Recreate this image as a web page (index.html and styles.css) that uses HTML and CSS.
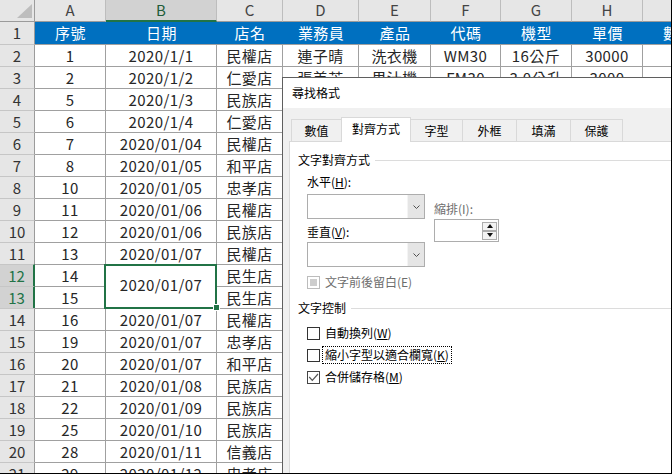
FILE: index.html
```html
<!DOCTYPE html>
<html lang="zh-Hant">
<head>
<meta charset="utf-8">
<title>尋找格式</title>
<link rel="stylesheet" href="styles.css">
</head>
<body>
<div class="screen">
  <div class="sheet">
    <div class="corner"><span class="tri"></span></div>
    <div class="ch">A</div><div class="ch sel">B</div><div class="ch">C</div><div class="ch">D</div><div class="ch">E</div><div class="ch">F</div><div class="ch">G</div><div class="ch">H</div><div class="ch">I</div>

    <div class="rh first">1</div>
    <div class="c hd">序號</div><div class="c hd">日期</div><div class="c hd">店名</div><div class="c hd">業務員</div><div class="c hd">產品</div><div class="c hd">代碼</div><div class="c hd">機型</div><div class="c hd">單價</div><div class="c hd">數量</div>

    <div class="rh">2</div>
    <div class="c">1</div><div class="c">2020/1/1</div><div class="c">民權店</div><div class="c">連子晴</div><div class="c">洗衣機</div><div class="c">WM30</div><div class="c">16公斤</div><div class="c">30000</div><div class="c"></div>

    <div class="rh">3</div>
    <div class="c">2</div><div class="c">2020/1/2</div><div class="c">仁愛店</div><div class="c">張美芳</div><div class="c">果汁機</div><div class="c">FM30</div><div class="c">3.0公升</div><div class="c">3000</div><div class="c"></div>

    <div class="rh">4</div><div class="c">5</div><div class="c">2020/1/3</div><div class="c">民族店</div><div class="fill"></div>
    <div class="rh">5</div><div class="c">6</div><div class="c">2020/1/4</div><div class="c">仁愛店</div><div class="fill"></div>
    <div class="rh">6</div><div class="c">7</div><div class="c">2020/01/04</div><div class="c">民權店</div><div class="fill"></div>
    <div class="rh">7</div><div class="c">8</div><div class="c">2020/01/05</div><div class="c">和平店</div><div class="fill"></div>
    <div class="rh">8</div><div class="c">10</div><div class="c">2020/01/05</div><div class="c">忠孝店</div><div class="fill"></div>
    <div class="rh">9</div><div class="c">11</div><div class="c">2020/01/06</div><div class="c">民權店</div><div class="fill"></div>
    <div class="rh">10</div><div class="c">12</div><div class="c">2020/01/06</div><div class="c">民族店</div><div class="fill"></div>
    <div class="rh">11</div><div class="c">13</div><div class="c">2020/01/07</div><div class="c">民權店</div><div class="fill"></div>
    <div class="rh sel">12</div><div class="c">14</div><div class="c merged">2020/01/07<span class="handle"></span></div><div class="c">民生店</div><div class="fill"></div>
    <div class="rh sel">13</div><div class="c">15</div><div class="c">民生店</div><div class="fill"></div>
    <div class="rh">14</div><div class="c">16</div><div class="c">2020/01/07</div><div class="c">民權店</div><div class="fill"></div>
    <div class="rh">15</div><div class="c">19</div><div class="c">2020/01/07</div><div class="c">忠孝店</div><div class="fill"></div>
    <div class="rh">16</div><div class="c">20</div><div class="c">2020/01/07</div><div class="c">和平店</div><div class="fill"></div>
    <div class="rh">17</div><div class="c">21</div><div class="c">2020/01/08</div><div class="c">民族店</div><div class="fill"></div>
    <div class="rh">18</div><div class="c">22</div><div class="c">2020/01/09</div><div class="c">民族店</div><div class="fill"></div>
    <div class="rh">19</div><div class="c">25</div><div class="c">2020/01/10</div><div class="c">民族店</div><div class="fill"></div>
    <div class="rh">20</div><div class="c">28</div><div class="c">2020/01/11</div><div class="c">信義店</div><div class="fill"></div>
    <div class="rh">21</div><div class="c">29</div><div class="c">2020/01/12</div><div class="c">忠孝店</div><div class="fill"></div>
  </div>

  <div class="dialog">
    <div class="dlg-title">尋找格式</div>
    <div class="dlg-body">
      <div class="tabs">
        <div class="tab tab-num">數值</div>
        <div class="tab active">對齊方式</div>
        <div class="tab tab-font">字型</div>
        <div class="tab tab-wide">外框</div>
        <div class="tab tab-wide">填滿</div>
        <div class="tab tab-font">保護</div>
      </div>
      <div class="panel">
        <div class="group-title"><span>文字對齊方式</span><i class="rule"></i></div>
        <div class="align-row">
          <div class="col-left">
            <div class="lbl lbl-h">水平(<u>H</u>):</div>
            <div class="combo combo-h"><div class="combo-btn"><svg width="7" height="4" viewBox="0 0 7 4"><polyline points="0.5,0.5 3.5,3.5 6.5,0.5" fill="none" stroke="#505050" stroke-width="1"/></svg></div></div>
            <div class="lbl lbl-v">垂直(<u>V</u>):</div>
            <div class="combo combo-v"><div class="combo-btn"><svg width="7" height="4" viewBox="0 0 7 4"><polyline points="0.5,0.5 3.5,3.5 6.5,0.5" fill="none" stroke="#505050" stroke-width="1"/></svg></div></div>
          </div>
          <div class="col-right">
            <div class="lbl dis">縮排(I):</div>
            <div class="spin">
              <div class="spin-btns">
                <span class="spin-b"><i class="arr-up"></i></span>
                <span class="spin-b"><i class="arr-dn"></i></span>
              </div>
            </div>
          </div>
        </div>
        <div class="chk-row chk-first dis"><span class="box box-dis"><i></i></span><span class="txt">文字前後留白(E)</span></div>
        <div class="group-title group-2"><span>文字控制</span><i class="rule"></i></div>
        <div class="chk-row chk-top"><span class="box"></span><span class="txt">自動換列(<u>W</u>)</span></div>
        <div class="chk-row"><span class="box"></span><span class="txt focus">縮小字型以適合欄寬(<u>K</u>)</span></div>
        <div class="chk-row"><span class="box box-on"><svg width="11" height="11" viewBox="0 0 11 11"><polyline points="1.2,5 4.3,8.3 10,2" fill="none" stroke="#555" stroke-width="1.2"/></svg></span><span class="txt">合併儲存格(<u>M</u>)</span></div>
      </div>
    </div>
  </div>
</div>
</body>
</html>
```

FILE: styles.css
```css
body {
  margin: 0;
  background: #fff;
}

.screen {
  position: relative;
  width: 672px;
  height: 474px;
  box-sizing: border-box;
  border-right: 1px solid #000;
  border-bottom: 1px solid #000;
  overflow: hidden;
  background: #fff;
  font-family: "Noto Sans CJK TC", "Noto Sans", sans-serif;
}

/* ---------- spreadsheet ---------- */
.sheet {
  display: grid;
  grid-template-columns: 35px 71px 111px 66px 76px 72px 70px 71px 71px 71px;
  grid-auto-rows: 22px;
  font-size: 15px;
  color: #262626;
}

.corner {
  box-sizing: border-box;
  background: #e6e6e6;
  border-right: 1px solid #9b9b9b;
  border-bottom: 1px solid #9b9b9b;
  display: flex;
  align-items: flex-end;
  justify-content: flex-end;
  padding: 0 2px 3px 0;
}

.tri {
  width: 0;
  height: 0;
  border-left: 15px solid transparent;
  border-bottom: 14px solid #bdbdbd;
}

.ch {
  box-sizing: border-box;
  background: #e6e6e6;
  border-right: 1px solid #bdbdbd;
  border-bottom: 1px solid #9b9b9b;
  color: #444;
  text-align: center;
  line-height: 19px;
}

.ch.sel {
  background: #d2d2d2;
  border-bottom: 2px solid #217346;
  color: #215c38;
}

.rh {
  box-sizing: border-box;
  background: #e6e6e6;
  border-right: 1px solid #9b9b9b;
  border-top: 1px solid #c6c6c6;
  color: #333;
  text-align: center;
  line-height: 21px;
}

.rh.first {
  border-top: none;
  line-height: 22px;
}

.rh.sel {
  background: #d2d2d2;
  color: #217346;
  border-right: 2px solid #217346;
}

.c {
  box-sizing: border-box;
  border-right: 1px solid #a0a0a0;
  border-top: 1px solid #a0a0a0;
  text-align: center;
  line-height: 21px;
  white-space: nowrap;
  overflow: hidden;
  letter-spacing: 0.4px;
}

.c.hd {
  background: #0070c0;
  color: #fff;
  border: none;
  line-height: 22px;
}

.fill {
  grid-column: span 6;
}

.merged {
  grid-row: span 2;
  position: relative;
  z-index: 2;
  overflow: visible;
  line-height: 39px;
}

.merged::after {
  content: "";
  position: absolute;
  left: -2px;
  top: -1px;
  right: -1px;
  bottom: -1px;
  border: 2px solid #217346;
}

.handle {
  position: absolute;
  z-index: 3;
  right: -4px;
  bottom: -3px;
  width: 7px;
  height: 7px;
  box-sizing: border-box;
  background: #217346;
  border: 1px solid #fff;
}

/* ---------- dialog ---------- */
.dialog {
  position: absolute;
  left: 282px;
  top: 77px;
  right: -40px;
  bottom: -40px;
  border: 1px solid #5f5f5f;
  background: #f0f0f0;
  display: flex;
  flex-direction: column;
  font-size: 12px;
  color: #000;
}

.dlg-title {
  background: #fff;
  height: 30px;
  line-height: 30px;
  padding-left: 9px;
}

.dlg-body {
  flex: 1;
  display: flex;
  flex-direction: column;
  padding: 9px 0 0 6px;
}

.tabs {
  display: flex;
  align-items: flex-end;
  margin-left: 2px;
  margin-bottom: -1px;
  position: relative;
  z-index: 1;
}

.tab {
  box-sizing: border-box;
  width: 53px;
  height: 22px;
  margin-bottom: 1px;
  margin-left: -1px;
  border: 1px solid #d9d9d9;
  border-bottom: none;
  background: #f0f0f0;
  text-align: center;
  line-height: 21px;
}

.tab-num {
  width: 51px;
  margin-left: 0;
}

.tab-font {
  width: 53px;
}

.tab-wide {
  width: 55px;
}

.tab.active {
  width: 70px;
  height: 25px;
  margin-bottom: 0;
  background: #fff;
  line-height: 22px;
}

.panel {
  flex: 1;
  background: #fff;
  border: 1px solid #d9d9d9;
  padding: 10px 0 0 8px;
}

.group-title {
  display: flex;
  align-items: center;
  height: 16px;
  line-height: 16px;
}

.group-title .rule {
  flex: 1;
  height: 1px;
  background: #dcdcdc;
  margin-left: 5px;
}

.group-2 {
  margin-top: 7px;
}

.align-row {
  display: flex;
  align-items: flex-start;
  margin-left: 9px;
  margin-top: 6px;
}

.col-left {
  width: 118px;
  display: flex;
  flex-direction: column;
}

.lbl {
  height: 16px;
  line-height: 16px;
  white-space: nowrap;
}

.lbl-v {
  margin-top: 5px;
}

.dis {
  color: #6d6d6d;
}

.combo {
  box-sizing: border-box;
  height: 25px;
  border: 1px solid #adadad;
  background: #fff;
  display: flex;
  justify-content: flex-end;
}

.combo-h {
  margin-top: 4px;
}

.combo-v {
  margin-top: 2px;
}

.combo-btn {
  width: 16px;
  background: #e5e5e5;
  border-left: 1px solid #f4f4f4;
  display: flex;
  align-items: center;
  justify-content: center;
}

.col-right {
  margin-left: 9px;
  padding-top: 27px;
}

.spin {
  box-sizing: border-box;
  margin-top: 2px;
  width: 65px;
  height: 23px;
  border: 1px solid #adadad;
  background: #fff;
  display: flex;
  justify-content: flex-end;
  align-items: center;
  padding-right: 1px;
}

.spin-btns {
  display: flex;
  flex-direction: column;
}

.spin-b {
  box-sizing: border-box;
  width: 15px;
  height: 9px;
  border: 1px solid #adadad;
  background: #f3f3f3;
  display: flex;
  align-items: center;
  justify-content: center;
}

.arr-up {
  width: 0;
  height: 0;
  border-left: 3.5px solid transparent;
  border-right: 3.5px solid transparent;
  border-bottom: 4px solid #111;
}

.arr-dn {
  width: 0;
  height: 0;
  border-left: 3.5px solid transparent;
  border-right: 3.5px solid transparent;
  border-top: 4px solid #111;
}

.chk-row {
  display: flex;
  align-items: center;
  height: 22px;
  margin-left: 9px;
}

.chk-first {
  margin-top: 4px;
}

.chk-top {
  margin-top: 6px;
}

.box {
  box-sizing: border-box;
  width: 13px;
  height: 13px;
  border: 1px solid #333;
  background: #fff;
  display: flex;
  align-items: center;
  justify-content: center;
  flex: none;
}

.box-dis {
  border-color: #bcbcbc;
}

.box-dis i {
  width: 7px;
  height: 7px;
  background: #cdcdcd;
}

.box-on {
  border-color: #444;
}

.txt {
  margin-left: 2px;
  border: 1px dotted transparent;
  padding: 0 2px;
  line-height: 16px;
  white-space: nowrap;
}

.txt.focus {
  border-color: #000;
}
```
